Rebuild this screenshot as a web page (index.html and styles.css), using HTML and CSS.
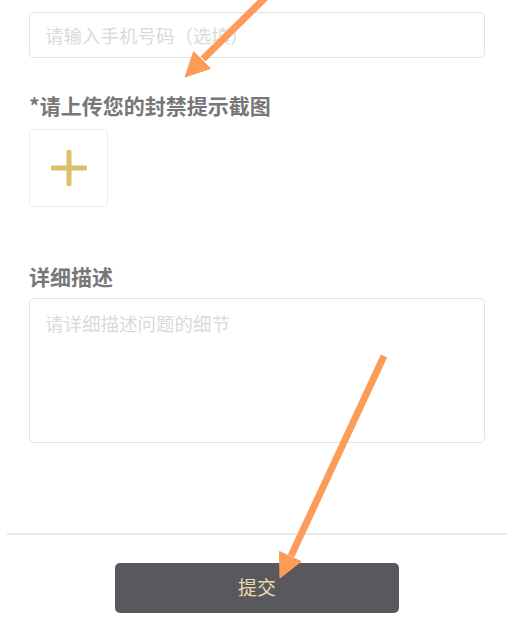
FILE: index.html
```html
<!DOCTYPE html>
<html lang="zh">
<head>
<meta charset="utf-8">
<title>申诉</title>
<link rel="stylesheet" href="styles.css">
</head>
<body>
<div class="page">
  <form class="form">
    <div class="field">
      <div class="label label-top">手机号码</div>
      <div class="input"><span class="ph">请输入手机号码（选填）</span></div>
    </div>
    <div class="field field-upload">
      <div class="label label-upload">*请上传您的封禁提示截图</div>
      <div class="upload">
        <svg width="36" height="36" viewBox="0 0 36 36"><path d="M18 2V34M2 18H34" stroke="#dcc06c" stroke-width="5" stroke-linecap="round" fill="none"/></svg>
      </div>
    </div>
    <div class="field field-desc">
      <div class="label">详细描述</div>
      <div class="textarea"><span class="ph">请详细描述问题的细节</span></div>
    </div>
  </form>
  <div class="footer">
    <button class="submit" type="button">提交</button>
  </div>
  <svg class="arrows" width="514" height="639" viewBox="0 0 514 639">
    <g fill="#fd9c58" stroke="#fd9c58">
      <line x1="272" y1="-9" x2="203" y2="59" stroke-width="7"/>
      <polygon points="185,77 210.5,68.5 193.6,51.6" stroke-width="1" stroke-linejoin="round"/>
      <line x1="384" y1="356" x2="291" y2="556" stroke-width="7"/>
      <polygon points="280,578 301,561.5 279.5,551.5" stroke-width="1" stroke-linejoin="round"/>
    </g>
  </svg>
</div>
</body>
</html>
```

FILE: styles.css
```css
html, body {
  margin: 0;
  padding: 0;
  background: #ffffff;
}
body {
  font-family: "Noto Sans CJK SC", "Noto Sans", "Liberation Sans", sans-serif;
  width: 514px;
  height: 639px;
  overflow: hidden;
}
.page {
  position: relative;
  width: 514px;
  height: 639px;
  overflow: hidden;
}
.form {
  display: flex;
  flex-direction: column;
  padding: 0 29px;
  margin-top: -24px;
}
.label {
  font-size: 21px;
  line-height: 24px;
  font-weight: bold;
  color: #777777;
  margin-bottom: 10px;
}
.label-top {
  margin-bottom: 12px;
  color: #8a8a8a;
}
.label-upload {
  margin-bottom: 12px;
}
.field-upload {
  margin-top: 35px;
}
.field-desc {
  margin-top: 57px;
}
.input {
  box-sizing: border-box;
  height: 46px;
  border: 1px solid #e3e3e3;
  border-radius: 5px;
  padding: 0 15px;
  display: flex;
  align-items: center;
}
.ph {
  font-size: 18.5px;
  line-height: 24px;
  color: #dadada;
}
.upload {
  box-sizing: border-box;
  width: 79px;
  height: 78px;
  border: 1px solid #ececec;
  border-radius: 5px;
  display: flex;
  align-items: center;
  justify-content: center;
}
.textarea {
  box-sizing: border-box;
  height: 145px;
  border: 1px solid #e3e3e3;
  border-radius: 5px;
  padding: 12px 15px;
}
.footer {
  margin: 90px 7px 0;
  border-top: 2px solid #e9e9e9;
  display: flex;
  justify-content: center;
  padding-top: 28px;
}
.submit {
  width: 284px;
  height: 50px;
  border: none;
  border-radius: 5px;
  background: #59595d;
  color: #ead9b0;
  font-family: "Noto Sans CJK SC", "Noto Sans", sans-serif;
  font-size: 19px;
  line-height: 24px;
  padding: 0 0 3px;
  cursor: pointer;
}
.arrows {
  position: absolute;
  left: 0;
  top: 0;
  pointer-events: none;
}
```
